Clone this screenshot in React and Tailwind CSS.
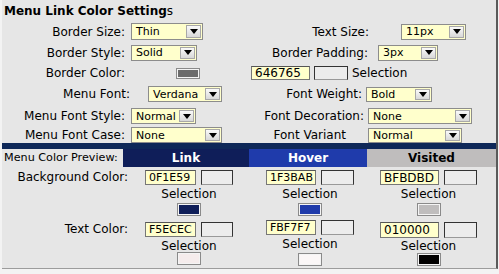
import React from "react";

const F = { fontFamily: '"DejaVu Sans", Verdana, sans-serif' };

function Select({ value, cls }) {
  return (
    <div className={"flex items-stretch border border-[#8c8c8c] bg-[#ffffcc] overflow-hidden " + cls}>
      <div className="flex-1 flex items-center pl-[4px] text-[11px] leading-none text-black whitespace-nowrap overflow-hidden">{value}</div>
      <div className="w-[15px] shrink-0 my-[1px] mr-[1px] border border-[#a8a8a8] bg-gradient-to-b from-[#fafafa] to-[#d8d8d8] flex items-center justify-center">
        <div className="w-0 h-0 border-l-[4px] border-r-[4px] border-t-[5px] border-l-transparent border-r-transparent border-t-black" />
      </div>
    </div>
  );
}

function Input({ value, cls }) {
  return (
    <div className={"flex items-center border border-[#777] border-t-[#555] bg-[#ffffcc] pl-[3px] leading-none text-black " + cls}>{value}</div>
  );
}

function Box({ cls }) {
  return <div className={"border border-[#333] border-b-[#999] bg-[#ececec] " + cls} />;
}

function Swatch({ color, cls }) {
  return (
    <div className={"border border-[#8a8a8a] p-[1px] bg-[#f4f4f4] " + cls}>
      <div className="w-full h-full" style={{ background: color }} />
    </div>
  );
}

function Cell({ value, swatch, inputCls, boxCls, textCls, cls, selCls }) {
  return (
    <div className={"flex flex-col items-center " + cls}>
      <div className="flex items-center gap-[5px]">
        <Input value={value} cls={inputCls + " " + textCls} />
        <Box cls={boxCls} />
      </div>
      <div className={"text-[12px] leading-none text-black " + selCls}>Selection</div>
      <Swatch color={swatch} cls="w-[24px] h-[13px]" />
    </div>
  );
}

export default function App() {
  return (
    <div className="w-[499px] h-[274px] bg-[#f3f3f3] overflow-hidden" style={F}>
      <div className="ml-[2px] w-[496px] h-[269px] bg-[#e6e6e6] border-r-2 border-r-[#5a5a5a] border-b border-b-[#9c9c9c] text-black">
        {/* title */}
        <div className="h-[21px] pl-[2px] pt-[5px] text-[12px] leading-none">
          <span className="font-bold">Menu Link Color Setting</span>s
        </div>

        {/* row 1 */}
        <div className="h-[21px] flex items-center text-[12px]">
          <div className="w-[123px] text-right">Border Size:</div>
          <Select value="Thin" cls="ml-[6px] w-[72px] h-[17px]" />
          <div className="w-[166px] text-right">Text Size:</div>
          <Select value="11px" cls="ml-[32px] w-[65px] h-[16px]" />
        </div>

        {/* row 2 */}
        <div className="h-[21px] flex items-center text-[12px]">
          <div className="w-[123px] text-right">Border Style:</div>
          <Select value="Solid" cls="ml-[6px] w-[66px] h-[16px]" />
          <div className="w-[171px] text-right">Border Padding:</div>
          <Select value="3px" cls="ml-[10px] w-[60px] h-[16px]" />
        </div>

        {/* row 3 */}
        <div className="h-[20px] flex items-center text-[12px]">
          <div className="w-[123px] text-right">Border Color:</div>
          <Swatch color="#6b6b6b" cls="ml-[51px] w-[24px] h-[11px]" />
          <Input value="646765" cls="ml-[51px] w-[59px] h-[14px] text-[12px]" />
          <Box cls="ml-[4px] w-[34px] h-[14px]" />
          <div className="ml-[4px]">Selection</div>
        </div>

        {/* row 4 */}
        <div className="h-[22px] flex items-center text-[12px]">
          <div className="w-[128px] text-right">Menu Font:</div>
          <Select value="Verdana" cls="ml-[18px] w-[74px] h-[16px]" />
          <div className="w-[140px] text-right">Font Weight:</div>
          <Select value="Bold" cls="ml-[4px] w-[66px] h-[15px]" />
        </div>

        {/* row 5 */}
        <div className="h-[22px] flex items-center text-[12px]">
          <div className="w-[123px] text-right">Menu Font Style:</div>
          <Select value="Normal" cls="ml-[6px] w-[65px] h-[16px]" />
          <div className="w-[168px] text-right">Font Decoration:</div>
          <Select value="None" cls="ml-[4px] w-[104px] h-[16px]" />
        </div>

        {/* row 6 */}
        <div className="h-[16px] flex items-center text-[12px]">
          <div className="w-[123px] text-right">Menu Font Case:</div>
          <Select value="None" cls="ml-[6px] w-[91px] h-[16px]" />
          <div className="w-[124px] text-right">Font Variant</div>
          <Select value="Normal" cls="ml-[22px] w-[94px] h-[15px]" />
        </div>

        {/* band */}
        <div className="h-[6px] bg-[#0e2858]" />

        {/* preview header */}
        <div className="h-[18px] flex items-stretch text-[12px]">
          <div className="w-[121px] flex items-center pl-[2px] whitespace-nowrap text-[11.2px]">Menu Color Preview:</div>
          <div className="w-[126px] bg-[#0f1e59] text-white font-bold flex items-center justify-center">Link</div>
          <div className="w-[118px] bg-[#1f3bab] text-white font-bold flex items-center justify-center">Hover</div>
          <div className="w-[129px] bg-[#bfbdbd] text-black font-bold flex items-center justify-center">Visited</div>
        </div>

        {/* background row */}
        <div className="h-[53px] flex items-start pt-[3px] text-[12px]">
          <div className="w-[121px] flex justify-end leading-[15px] whitespace-nowrap"><span className="-mr-[5px]">Background Color:</span></div>
          <Cell value="0F1E59" swatch="#0f1e59" cls="w-[126px] pl-[6px]" inputCls="w-[51px] h-[15px]" textCls="text-[11px]" boxCls="w-[32px] h-[15px]" selCls="mt-[3px] mb-[3px]" />
          <Cell value="1F3BAB" swatch="#1f3bab" cls="w-[118px] pl-[4px]" inputCls="w-[50px] h-[15px]" textCls="text-[11px]" boxCls="w-[33px] h-[15px]" selCls="mt-[3px] mb-[3px]" />
          <Cell value="BFBDBD" swatch="#bfbdbd" cls="w-[129px] -ml-[3px]" inputCls="w-[59px] h-[15px]" textCls="text-[12px]" boxCls="w-[33px] h-[15px]" selCls="mt-[3px] mb-[3px]" />
        </div>

        {/* text color row */}
        <div className="h-[49px] flex items-start pt-[2px] text-[12px]">
          <div className="w-[121px] flex justify-end leading-[15px]"><span className="-mr-[5px]">Text Color:</span></div>
          <Cell value="F5ECEC" swatch="#f5ecec" cls="w-[126px] pl-[6px]" inputCls="w-[51px] h-[15px]" textCls="text-[11px]" boxCls="w-[32px] h-[15px]" selCls="mt-[3px] mb-0" />
          <Cell value="FBF7F7" swatch="#fbf7f7" cls="w-[118px] pl-[4px] -mt-[2px]" inputCls="w-[50px] h-[15px]" textCls="text-[11px]" boxCls="w-[33px] h-[15px]" selCls="mt-[3px] mb-[3px]" />
          <Cell value="010000" swatch="#010000" cls="w-[129px] -ml-[3px]" inputCls="w-[59px] h-[16px]" textCls="text-[12px]" boxCls="w-[33px] h-[16px]" selCls="mt-[2px] mb-[1px]" />
        </div>
      </div>
    </div>
  );
}
